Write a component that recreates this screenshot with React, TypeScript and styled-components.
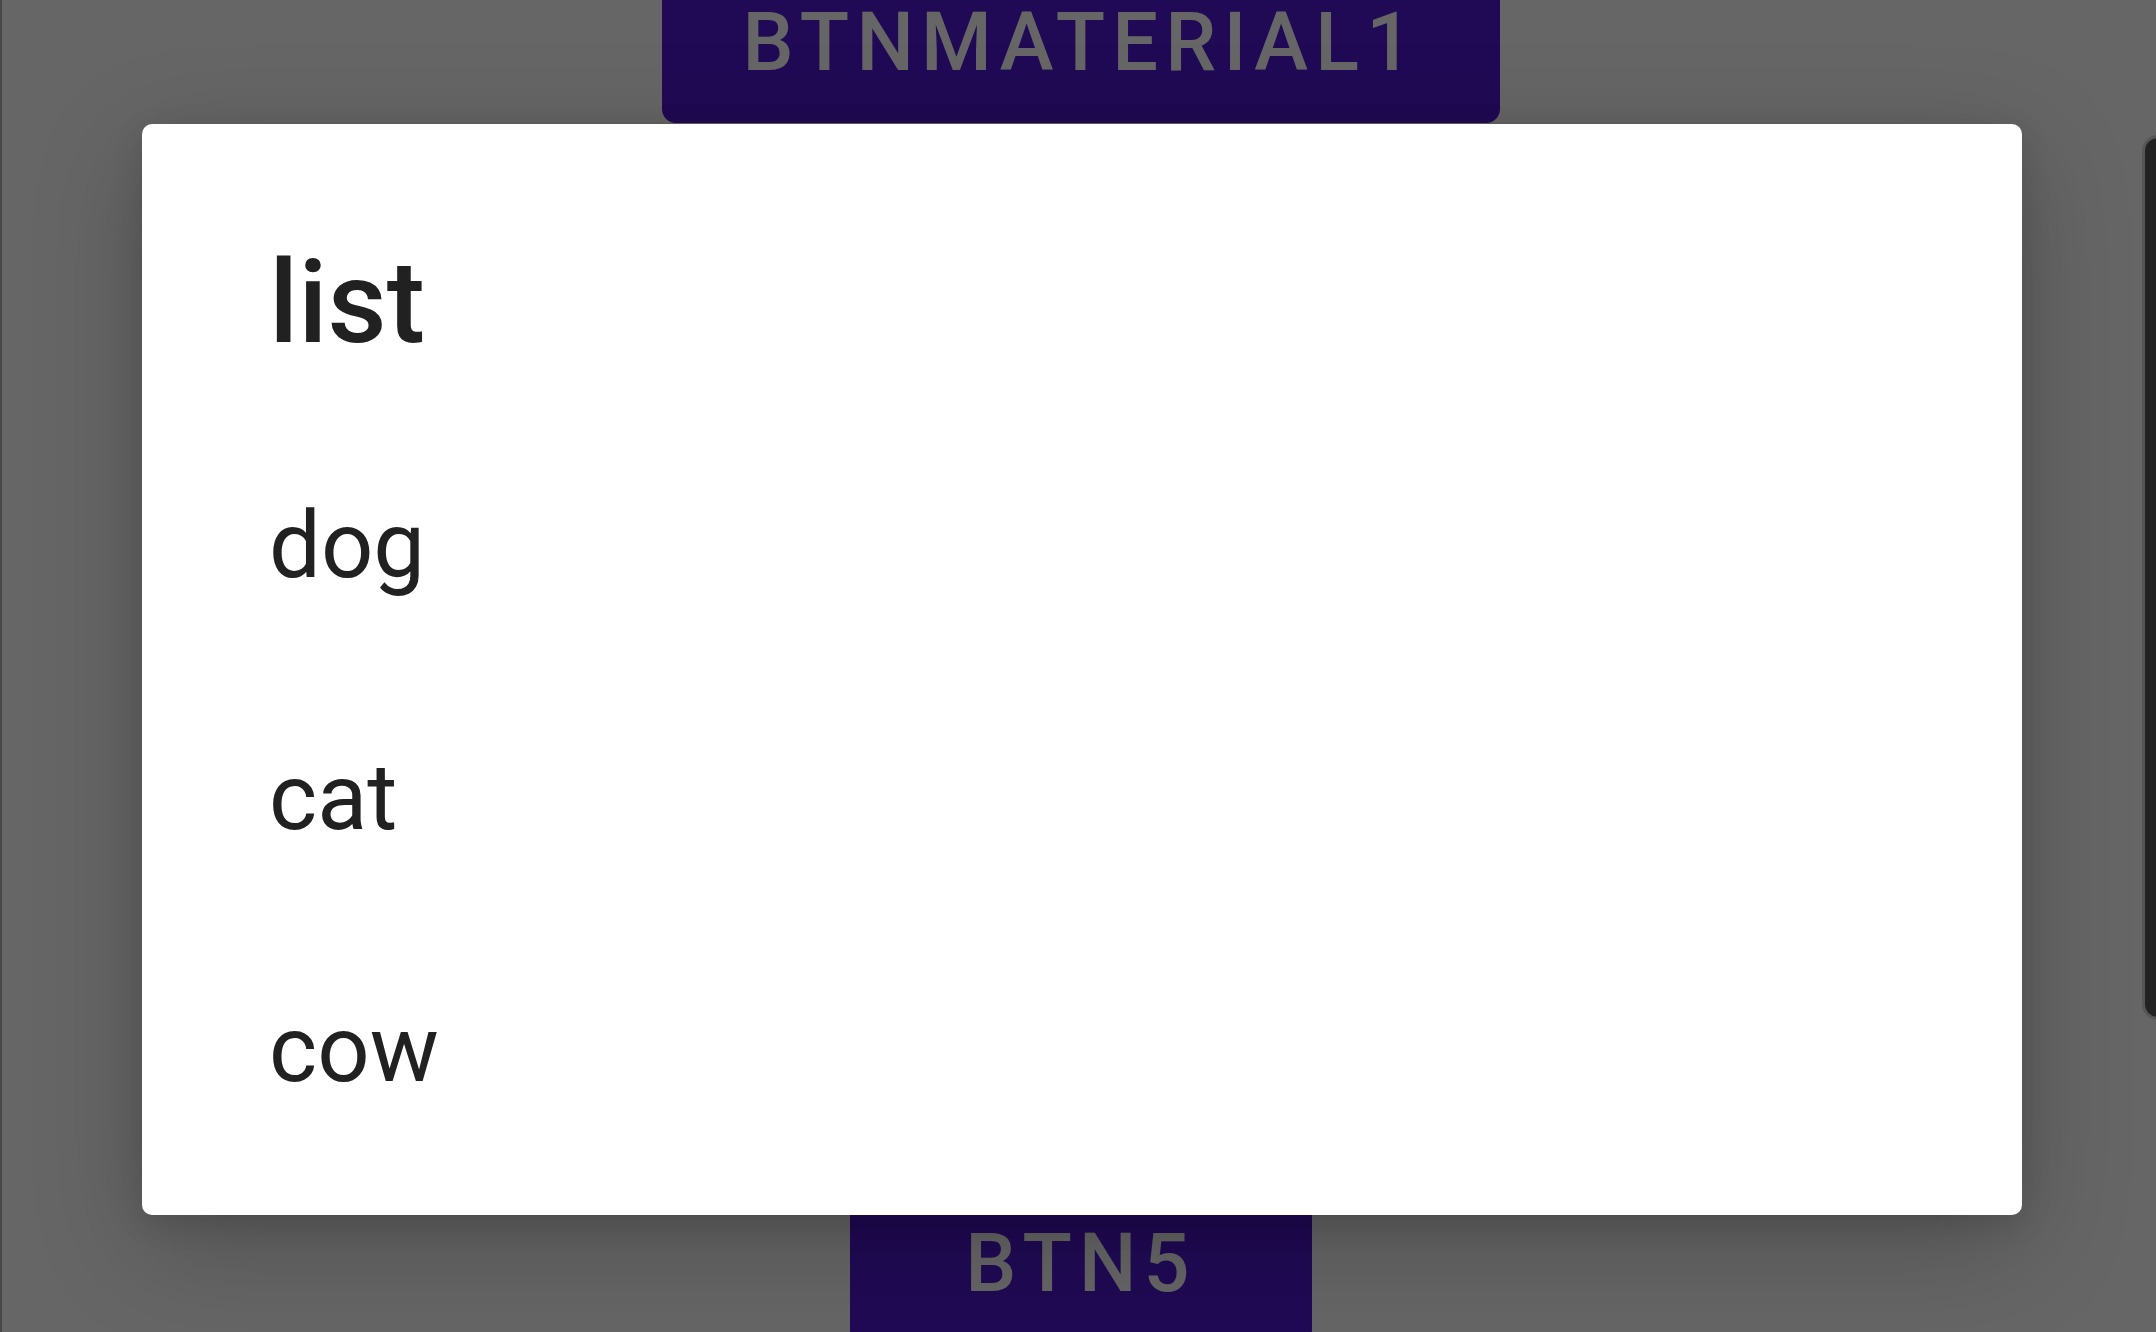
import React from "react";
import styled, { createGlobalStyle } from "styled-components";

const Global = createGlobalStyle`
  html, body { margin: 0; padding: 0; background: #ffffff; }
  body { font-family: Roboto, "Noto Sans", "Liberation Sans", sans-serif; }
  #root { width: 2156px; height: 1332px; }
`;

const Screen = styled.div`
  position: relative;
  width: 2156px;
  height: 1332px;
  overflow: hidden;
  background: #ffffff;
  display: flex;
  flex-direction: row;
`;

const EdgeLine = styled.div`
  width: 2px;
  flex: none;
  background: #b4b4b4;
`;

const Main = styled.main`
  flex: 1;
  display: flex;
  flex-direction: column;
  align-items: center;
  padding-left: 18px;
  gap: 1053px;
`;

const MaterialButton = styled.button<{ $w: number; $lift?: number }>`
  width: ${(p) => p.$w}px;
  height: 168px;
  margin-top: ${(p) => (p.$lift ? -p.$lift : 0)}px;
  flex: none;
  border: none;
  border-radius: 14px;
  background: #5019d4;
  color: #ffffff;
  font-family: Roboto, "Noto Sans", sans-serif;
  font-weight: 500;
  font-size: 81px;
  letter-spacing: 7.2px;
  text-transform: uppercase;
  display: flex;
  align-items: center;
  justify-content: center;
  padding: 6px 0 0;
  box-sizing: border-box;
  line-height: 1;
`;

const SideRail = styled.aside`
  width: 14px;
  flex: none;
  overflow: hidden;
  padding-top: 135px;
`;

const SideCard = styled.div`
  width: 40px;
  height: 885px;
  box-sizing: border-box;
  border: 3px solid #d6d6d6;
  border-radius: 16px;
  background: #565656;
`;

const Scrim = styled.div`
  position: absolute;
  inset: 0;
  background: rgba(0, 0, 0, 0.6);
`;

const Dialog = styled.div`
  position: absolute;
  left: 142px;
  top: 124px;
  width: 1880px;
  box-sizing: border-box;
  background: #ffffff;
  border-radius: 10px;
  box-shadow: 0 30px 110px rgba(0, 0, 0, 0.22), 0 8px 30px rgba(0, 0, 0, 0.12);
  padding: 121px 0 39px;
  display: flex;
  flex-direction: column;
`;

const Title = styled.h2`
  margin: 0 0 60px;
  padding: 0 127px;
  font-family: Roboto, "Noto Sans", sans-serif;
  font-weight: 500;
  font-size: 115px;
  line-height: 115px;
  color: #212121;
`;

const List = styled.ul`
  list-style: none;
  margin: 0;
  padding: 0;
`;

const Item = styled.li`
  height: 252px;
  display: flex;
  align-items: center;
  padding: 0 127px;
  font-family: Roboto, "Noto Sans", sans-serif;
  font-weight: 400;
  font-size: 92px;
  line-height: 1;
  color: #212121;
`;

export default function App() {
  const items = ["dog", "cat", "cow"];
  return (
    <>
      <Global />
      <Screen>
        <EdgeLine />
        <Main>
          <MaterialButton $w={838} $lift={45}>btnMaterial1</MaterialButton>
          <MaterialButton $w={462}>btn5</MaterialButton>
        </Main>
        <SideRail>
          <SideCard />
        </SideRail>
        <Scrim />
        <Dialog>
          <Title>list</Title>
          <List>
            {items.map((t) => (
              <Item key={t}>{t}</Item>
            ))}
          </List>
        </Dialog>
      </Screen>
    </>
  );
}
